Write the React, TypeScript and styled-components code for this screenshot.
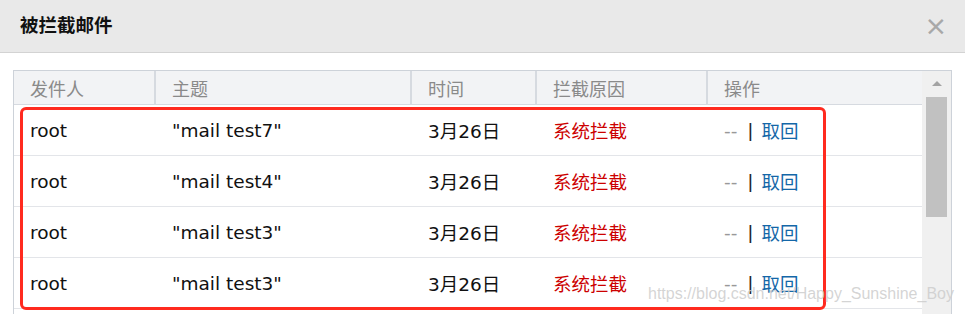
import React from "react";
import styled, { createGlobalStyle } from "styled-components";

const Global = createGlobalStyle`
  html, body { margin: 0; padding: 0; background: #fff; }
  body { font-family: "DejaVu Sans", "Noto Sans CJK SC", sans-serif; }
`;

const Dialog = styled.div`
  width: 965px;
  height: 314px;
  overflow: hidden;
  background: #fff;
  display: flex;
  flex-direction: column;
`;

const TitleBar = styled.div`
  height: 52px;
  flex: none;
  background: #e9e9e9;
  border-bottom: 1px solid #d3d3d3;
  display: flex;
  align-items: center;
  justify-content: space-between;
  padding: 0 20px;
`;

const Title = styled.h3`
  margin: 0;
  font-family: "Noto Sans CJK SC", sans-serif;
  font-size: 18.5px;
  font-weight: 700;
  color: #111;
  line-height: 1;
  margin-top: -4px;
`;

const Close = styled.span`
  font-family: "DejaVu Sans", sans-serif;
  font-size: 27px;
  color: #a8a8a8;
  line-height: 1;
  margin-right: -2px;
  margin-top: -2px;
`;

const Body = styled.div`
  flex: 1;
  padding: 17px 13px 0 13px;
  display: flex;
`;

const Frame = styled.div`
  position: relative;
  flex: 1;
  border: 1px solid #cdd2d9;
  border-bottom: none;
  display: flex;
`;

const TableArea = styled.div`
  flex: 1;
  display: flex;
  flex-direction: column;
`;

const cols = "142px 256px 125px 171px 1fr";

const HeaderRow = styled.div`
  display: grid;
  grid-template-columns: ${cols};
  height: 33px;
  background: #f2f3f5;
  border-bottom: 1px solid #d6dae0;
`;

const HeadCell = styled.div<{ $last?: boolean }>`
  display: flex;
  align-items: center;
  padding-left: 16px;
  font-family: "Noto Sans CJK SC", sans-serif;
  font-size: 18px;
  color: #8a8a8a;
  border-right: ${(p) => (p.$last ? "none" : "2px solid #d6dae0")};
`;

const Row = styled.div`
  display: grid;
  grid-template-columns: ${cols};
  height: 50px;
  border-bottom: 1px solid #e3e5e9;
`;

const Cell = styled.div<{ $tone?: "red" }>`
  display: flex;
  align-items: center;
  padding-left: 16px;
  font-size: 18.5px;
  color: ${(p) => (p.$tone === "red" ? "#cc0000" : "#111")};
  white-space: nowrap;
`;

const Dash = styled.span`
  color: #999;
`;

const Sep = styled.span`
  color: #222;
  margin: 0 8px 0 10px;
`;

const Link = styled.a`
  color: #1467a8;
  text-decoration: none;
  font-family: "Noto Sans CJK SC", sans-serif;
`;

const Scrollbar = styled.div`
  width: 29px;
  flex: none;
  background: #f0f0f0;
  display: flex;
  flex-direction: column;
  align-items: center;
  padding-top: 10px;
`;

const Arrow = styled.div`
  width: 0;
  height: 0;
  border-left: 5px solid transparent;
  border-right: 5px solid transparent;
  border-bottom: 5px solid #a3a3a3;
`;

const Thumb = styled.div`
  width: 21px;
  height: 120px;
  margin-top: 11px;
  background: #c1c1c1;
`;

const Highlight = styled.div`
  position: absolute;
  left: 6px;
  top: 36px;
  width: 800px;
  height: 197px;
  border: 3px solid #ff2a1f;
  border-radius: 6px;
  pointer-events: none;
`;

const Watermark = styled.div`
  position: absolute;
  left: 648px;
  top: 285px;
  font-family: "Liberation Sans", sans-serif;
  font-size: 16px;
  color: rgba(205, 205, 205, 0.85);
  white-space: nowrap;
  pointer-events: none;
`;

const Page = styled.div`
  position: relative;
`;

const rows = [
  { from: "root", subject: '"mail test7"' },
  { from: "root", subject: '"mail test4"' },
  { from: "root", subject: '"mail test3"' },
  { from: "root", subject: '"mail test3"' },
];

export default function App() {
  return (
    <Page>
      <Global />
      <Dialog>
        <TitleBar>
          <Title>被拦截邮件</Title>
          <Close>×</Close>
        </TitleBar>
        <Body>
          <Frame>
            <TableArea>
              <HeaderRow>
                <HeadCell>发件人</HeadCell>
                <HeadCell>主题</HeadCell>
                <HeadCell>时间</HeadCell>
                <HeadCell>拦截原因</HeadCell>
                <HeadCell $last>操作</HeadCell>
              </HeaderRow>
              {rows.map((r, i) => (
                <Row key={i}>
                  <Cell>{r.from}</Cell>
                  <Cell>{r.subject}</Cell>
                  <Cell>3月26日</Cell>
                  <Cell $tone="red">系统拦截</Cell>
                  <Cell>
                    <Dash>--</Dash>
                    <Sep>|</Sep>
                    <Link href="#">取回</Link>
                  </Cell>
                </Row>
              ))}
            </TableArea>
            <Scrollbar>
              <Arrow />
              <Thumb />
            </Scrollbar>
            <Highlight />
          </Frame>
        </Body>
      </Dialog>
      <Watermark>https://blog.csdn.net/Happy_Sunshine_Boy</Watermark>
    </Page>
  );
}
